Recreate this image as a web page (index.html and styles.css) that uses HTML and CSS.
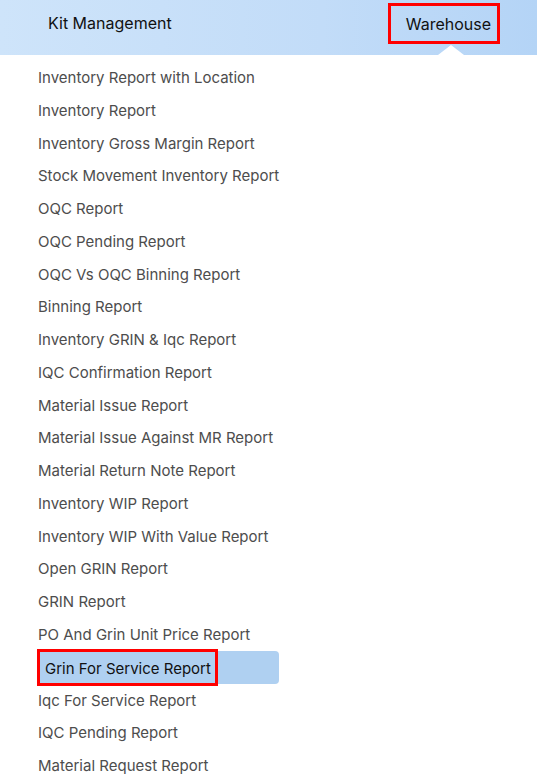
FILE: index.html
```html
<!DOCTYPE html>
<html lang="en">
<head>
    <meta charset="UTF-8">
    <meta name="viewport" content="width=device-width, initial-scale=1.0">
    <title>Warehouse Reports</title>
    <link rel="stylesheet" href="styles.css">
</head>
<body>
    <div class="navbar">
        <div class="nav-item">Kit Management</div>
        <div class="nav-item active">Warehouse</div>
    </div>

    <div class="menu">
        <div class="menu-item">Inventory Report with Location</div>
        <div class="menu-item">Inventory Report</div>
        <div class="menu-item">Inventory Gross Margin Report</div>
        <div class="menu-item">Stock Movement Inventory Report</div>
        <div class="menu-item">OQC Report</div>
        <div class="menu-item">OQC Pending Report</div>
        <div class="menu-item">OQC Vs OQC Binning Report</div>
        <div class="menu-item">Binning Report</div>
        <div class="menu-item">Inventory GRIN &amp; Iqc Report</div>
        <div class="menu-item">IQC Confirmation Report</div>
        <div class="menu-item">Material Issue Report</div>
        <div class="menu-item">Material Issue Against MR Report</div>
        <div class="menu-item">Material Return Note Report</div>
        <div class="menu-item">Inventory WIP Report</div>
        <div class="menu-item">Inventory WIP With Value Report</div>
        <div class="menu-item">Open GRIN Report</div>
        <div class="menu-item">GRIN Report</div>
        <div class="menu-item">PO And Grin Unit Price Report</div>
        <div class="menu-item selected"><span class="marked">Grin For Service Report</span></div>
        <div class="menu-item">Iqc For Service Report</div>
        <div class="menu-item">IQC Pending Report</div>
        <div class="menu-item">Material Request Report</div>
    </div>
</body>
</html>
```

FILE: styles.css
```css
* {
    margin: 0;
    padding: 0;
    box-sizing: border-box;
}

body {
    font-family: Inter, 'Noto Sans', sans-serif;
    background-color: #fff;
    overflow: hidden;
}

.navbar {
    height: 55px;
    display: flex;
    align-items: center;
    justify-content: space-between;
    padding: 0 37px 0 48px;
    background: linear-gradient(90deg, #cee4fa 0%, #c2dcf8 60%, #b4d4f6 100%);
    position: relative;
}

.nav-item {
    font-size: 16px;
    color: #111;
    margin-top: -9px;
}

.nav-item.active {
    border: 3px solid #f00;
    padding: 8px 6px 7px 15px;
    margin-top: -9px;
    position: relative;
}

.nav-item.active::after {
    content: '';
    position: absolute;
    left: 47px;
    bottom: -14px;
    border-left: 13px solid transparent;
    border-right: 13px solid transparent;
    border-bottom: 10px solid #fff;
}

.menu {
    padding-left: 38px;
    margin-top: 6px;
}

.menu-item {
    font-size: 15px;
    color: #4d4d4d;
    height: 32.75px;
    line-height: 34px;
    white-space: nowrap;
}

.menu-item.selected {
    width: 241px;
    background-color: #afd0f1;
    border-radius: 4px;
    color: #111;
    height: 33px;
    display: flex;
    align-items: center;
}

.marked {
    border: 3px solid #f00;
    margin-left: -1px;
    padding: 0 4px 0 5px;
    height: 37px;
    line-height: 33px;
}
```
